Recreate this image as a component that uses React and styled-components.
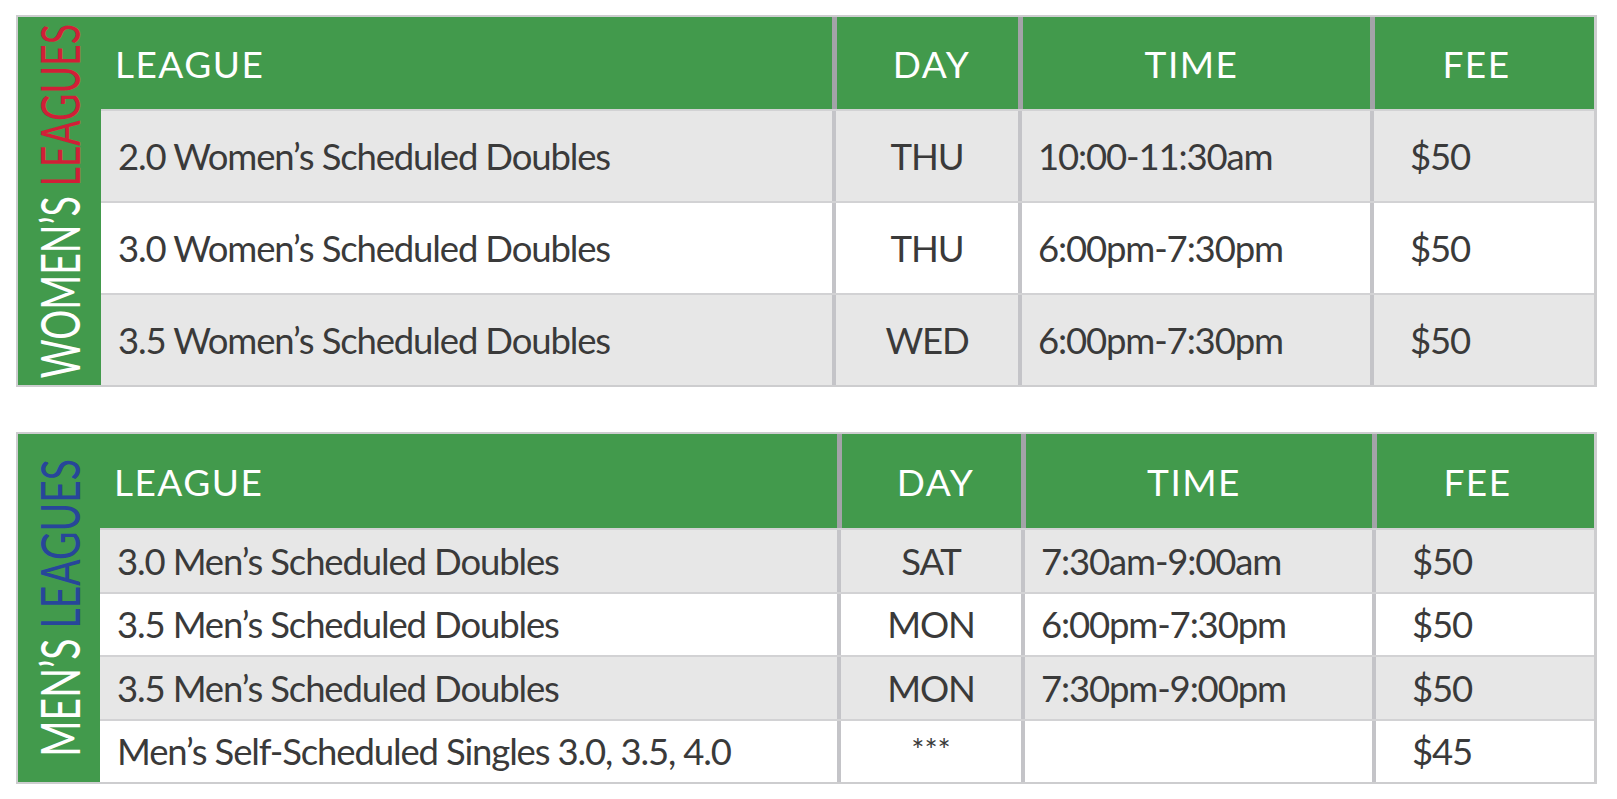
import styled, { createGlobalStyle } from "styled-components";

const GlobalStyle = createGlobalStyle`
  body {
    margin: 0;
    background: #ffffff;
    font-family: Lato, "Open Sans", "Liberation Sans", sans-serif;
  }
`;

const Page = styled.div`
  display: flex;
  flex-direction: column;
  gap: 45px;
  padding: 15px 0 0 16px;
`;

const Frame = styled.div`
  display: flex;
  width: 1581px;
  box-sizing: border-box;
  border: 2px solid #cdcdcf;
  border-right-width: 3px;
  background: #429a4c;
`;

const Side = styled.div`
  width: ${({ $w }) => $w}px;
  flex: none;
  display: flex;
  align-items: center;
  justify-content: center;
`;

const SideLabel = styled.span`
  writing-mode: vertical-rl;
  transform: rotate(180deg) scaleX(${({ $stretch }) => $stretch});
  font-size: ${({ $size }) => $size}px;
  font-weight: 400;
  line-height: 1;
  color: #ffffff;
  white-space: nowrap;
`;

const Accent = styled.span`
  color: ${({ $color }) => $color};
`;

const Body = styled.div`
  flex: 1;
  display: flex;
  flex-direction: column;
`;

const Row = styled.div`
  display: grid;
  grid-template-columns: ${({ $cols }) => $cols};
  height: ${({ $h }) => $h}px;
  box-sizing: border-box;
  background: ${({ $shade }) => ($shade ? "#e7e7e7" : "#ffffff")};
  border-top: 2px solid #d2d2d4;
`;

const HeadRow = styled.div`
  display: grid;
  grid-template-columns: ${({ $cols }) => $cols};
  height: ${({ $h }) => $h}px;
`;

const HeadCell = styled.div`
  display: flex;
  align-items: center;
  justify-content: ${({ $left }) => ($left ? "flex-start" : "center")};
  padding-left: ${({ $left, $nudge = 0 }) => ($left ? 14 : Math.max(0, 2 * $nudge))}px;
  padding-right: ${({ $nudge = 0 }) => Math.max(0, -2 * $nudge)}px;
  border-left: 5px solid #a3a3a8;
  color: #ffffff;
  font-size: 37px;
  letter-spacing: 1.5px;
  &:first-child {
    border-left: none;
  }
`;

const Cell = styled.div`
  display: flex;
  align-items: center;
  justify-content: ${({ $center }) => ($center ? "center" : "flex-start")};
  padding-left: ${({ $pad }) => $pad || 0}px;
  border-left: 4px solid #c4c4c8;
  color: #3a3a3a;
  font-size: 36.5px;
  letter-spacing: -1.15px;
  white-space: nowrap;
  &:first-child {
    border-left: none;
  }
`;

const Stars = styled.span`
  align-self: flex-start;
  margin-top: 9px;
  font-size: 31px;
  letter-spacing: 0;
`;

const women = [
  ["2.0 Women’s Scheduled Doubles", "THU", "10:00-11:30am", "$50"],
  ["3.0 Women’s Scheduled Doubles", "THU", "6:00pm-7:30pm", "$50"],
  ["3.5 Women’s Scheduled Doubles", "WED", "6:00pm-7:30pm", "$50"],
];

const men = [
  ["3.0 Men’s Scheduled Doubles", "SAT", "7:30am-9:00am", "$50"],
  ["3.5 Men’s Scheduled Doubles", "MON", "6:00pm-7:30pm", "$50"],
  ["3.5 Men’s Scheduled Doubles", "MON", "7:30pm-9:00pm", "$50"],
  ["Men’s Self-Scheduled Singles 3.0, 3.5, 4.0", "***", "", "$45"],
];

const LeagueTable = ({ who, accent, label, side, cols, headH, rowH, rows }) => (
  <Frame>
    <Side $w={side}>
      <SideLabel $size={label.size} $stretch={label.stretch}>
        {who} <Accent $color={accent}>LEAGUES</Accent>
      </SideLabel>
    </Side>
    <Body>
      <HeadRow $cols={cols} $h={headH}>
        <HeadCell $left>LEAGUE</HeadCell>
        <HeadCell $nudge={4}>DAY</HeadCell>
        <HeadCell $nudge={-5}>TIME</HeadCell>
        <HeadCell $nudge={-8}>FEE</HeadCell>
      </HeadRow>
      {rows.map(([name, day, time, fee], i) => (
        <Row key={i} $cols={cols} $h={rowH} $shade={i % 2 === 0}>
          <Cell $pad={17}>{name}</Cell>
          <Cell $center>{day === "***" ? <Stars>***</Stars> : day}</Cell>
          <Cell $pad={16}>{time}</Cell>
          <Cell $pad={36}>{fee}</Cell>
        </Row>
      ))}
    </Body>
  </Frame>
);

export default function App() {
  return (
    <>
      <GlobalStyle />
      <Page>
        <LeagueTable
          who="WOMEN’S"
          accent="#d01f37"
          label={{ size: 37.5, stretch: 1.45 }}
          side={83}
          cols="731px 186px 352px 224px"
          headH={92}
          rowH={92}
          rows={women}
        />
        <LeagueTable
          who="MEN’S"
          accent="#27469a"
          label={{ size: 39.1, stretch: 1.39 }}
          side={82}
          cols="737px 184px 351px 222px"
          headH={94}
          rowH={63.5}
          rows={men}
        />
      </Page>
    </>
  );
}
